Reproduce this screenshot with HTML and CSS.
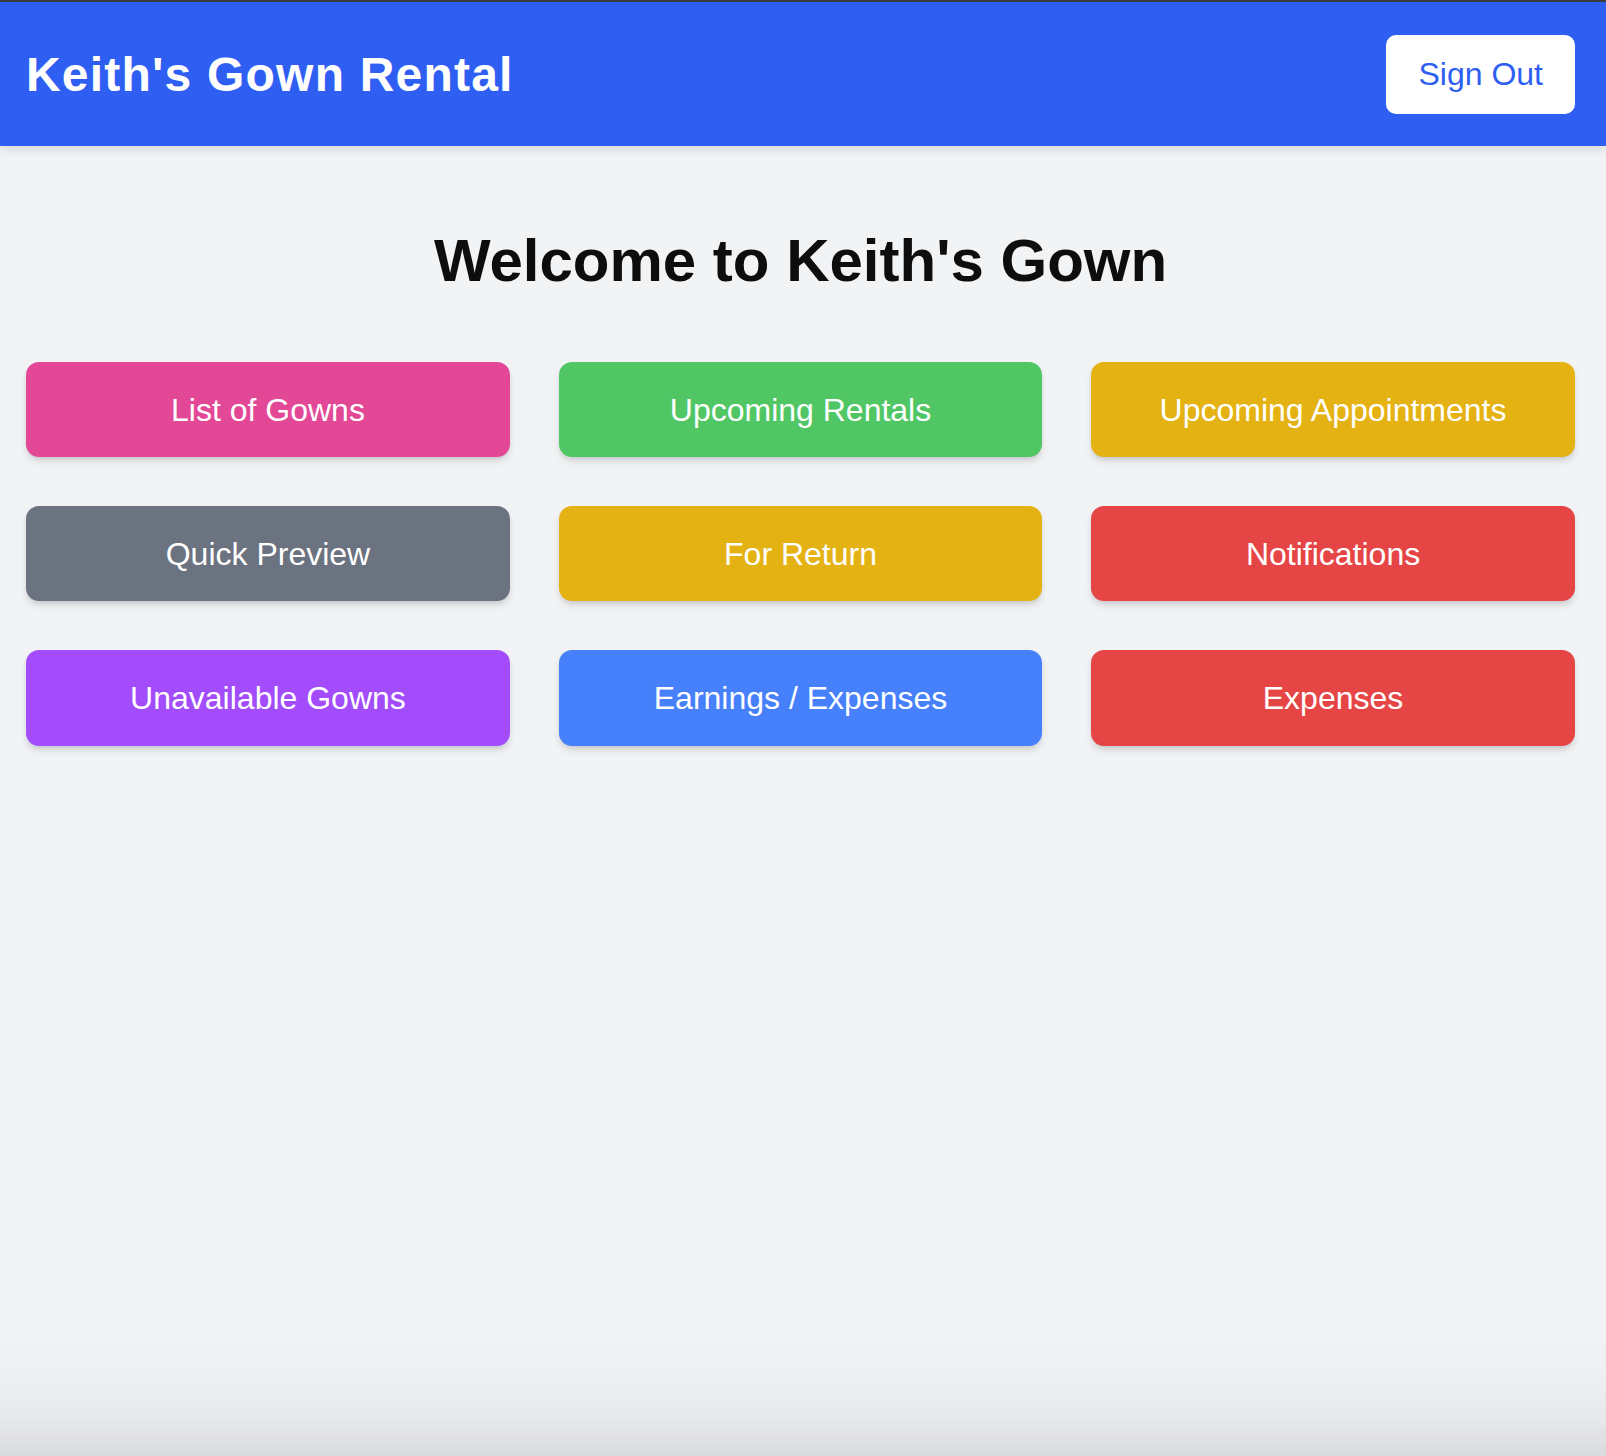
FILE: index.html
```html
<!DOCTYPE html>
<html lang="en">
<head>
<meta charset="utf-8">
<title>Keith's Gown Rental</title>
<link rel="stylesheet" href="styles.css">
</head>
<body>
<header class="topbar">
  <h1 class="brand">Keith's Gown Rental</h1>
  <button class="signout">Sign Out</button>
</header>
<main class="main">
  <h2 class="welcome">Welcome to Keith's Gown</h2>
  <div class="grid">
    <button class="tile pink">List of Gowns</button>
    <button class="tile green">Upcoming Rentals</button>
    <button class="tile yellow">Upcoming Appointments</button>
    <button class="tile gray">Quick Preview</button>
    <button class="tile yellow">For Return</button>
    <button class="tile red">Notifications</button>
    <button class="tile purple">Unavailable Gowns</button>
    <button class="tile blue">Earnings / Expenses</button>
    <button class="tile red">Expenses</button>
  </div>
</main>
<div class="bottom-shade"></div>
</body>
</html>
```

FILE: styles.css
```css
html, body {
  margin: 0;
  padding: 0;
}
body {
  background: #f2f3f5;
  font-family: "Liberation Sans", Arial, sans-serif;
  min-height: 1456px;
  border-top: 2px solid #3b3b3c;
  box-sizing: border-box;
}
.topbar {
  height: 144px;
  background: #2f5ef3;
  display: flex;
  align-items: center;
  justify-content: space-between;
  padding: 0 31px 0 26px;
  box-shadow: 0 4px 10px rgba(0, 0, 0, 0.1);
  position: relative;
  z-index: 1;
}
.brand {
  margin: 0;
  color: #ffffff;
  font-size: 48px;
  font-weight: 700;
  letter-spacing: 0.025em;
}
.signout {
  background: #ffffff;
  color: #2f5ef3;
  border: none;
  border-radius: 10px;
  font-family: "Liberation Sans", Arial, sans-serif;
  font-size: 32px;
  line-height: 43px;
  padding: 18px 32px;
  white-space: nowrap;
}
.main {
  padding: 85px 31px 0 26px;
}
.welcome {
  margin: 0 0 71px;
  text-align: center;
  font-size: 60px;
  line-height: 60px;
  font-weight: 700;
  color: #0d0d0d;
}
.grid {
  display: grid;
  grid-template-columns: repeat(3, 1fr);
  column-gap: 48.6px;
  row-gap: 48.7px;
}
.tile {
  border: none;
  border-radius: 13px;
  color: #ffffff;
  font-family: "Liberation Sans", Arial, sans-serif;
  font-size: 32px;
  line-height: 43px;
  padding: 27px 0 25.4px;
  text-align: center;
  box-shadow: 0 5px 8px -1px rgba(0, 0, 0, 0.12), 0 3px 5px -2px rgba(0, 0, 0, 0.1);
}
.pink { background: #e34896; }
.green { background: #50c764; }
.yellow { background: #e5b214; }
.gray { background: #6b7280; }
.red { background: #e64545; }
.purple { background: #a34cfc; }
.blue { background: #4680fa; }
.bottom-shade {
  position: fixed;
  left: 0;
  right: 0;
  bottom: 0;
  height: 130px;
  background: linear-gradient(to bottom, rgba(0, 0, 0, 0) 0%, rgba(0, 0, 0, 0.015) 40%, rgba(0, 0, 0, 0.04) 70%, rgba(0, 0, 0, 0.1) 100%);
  pointer-events: none;
}
```
